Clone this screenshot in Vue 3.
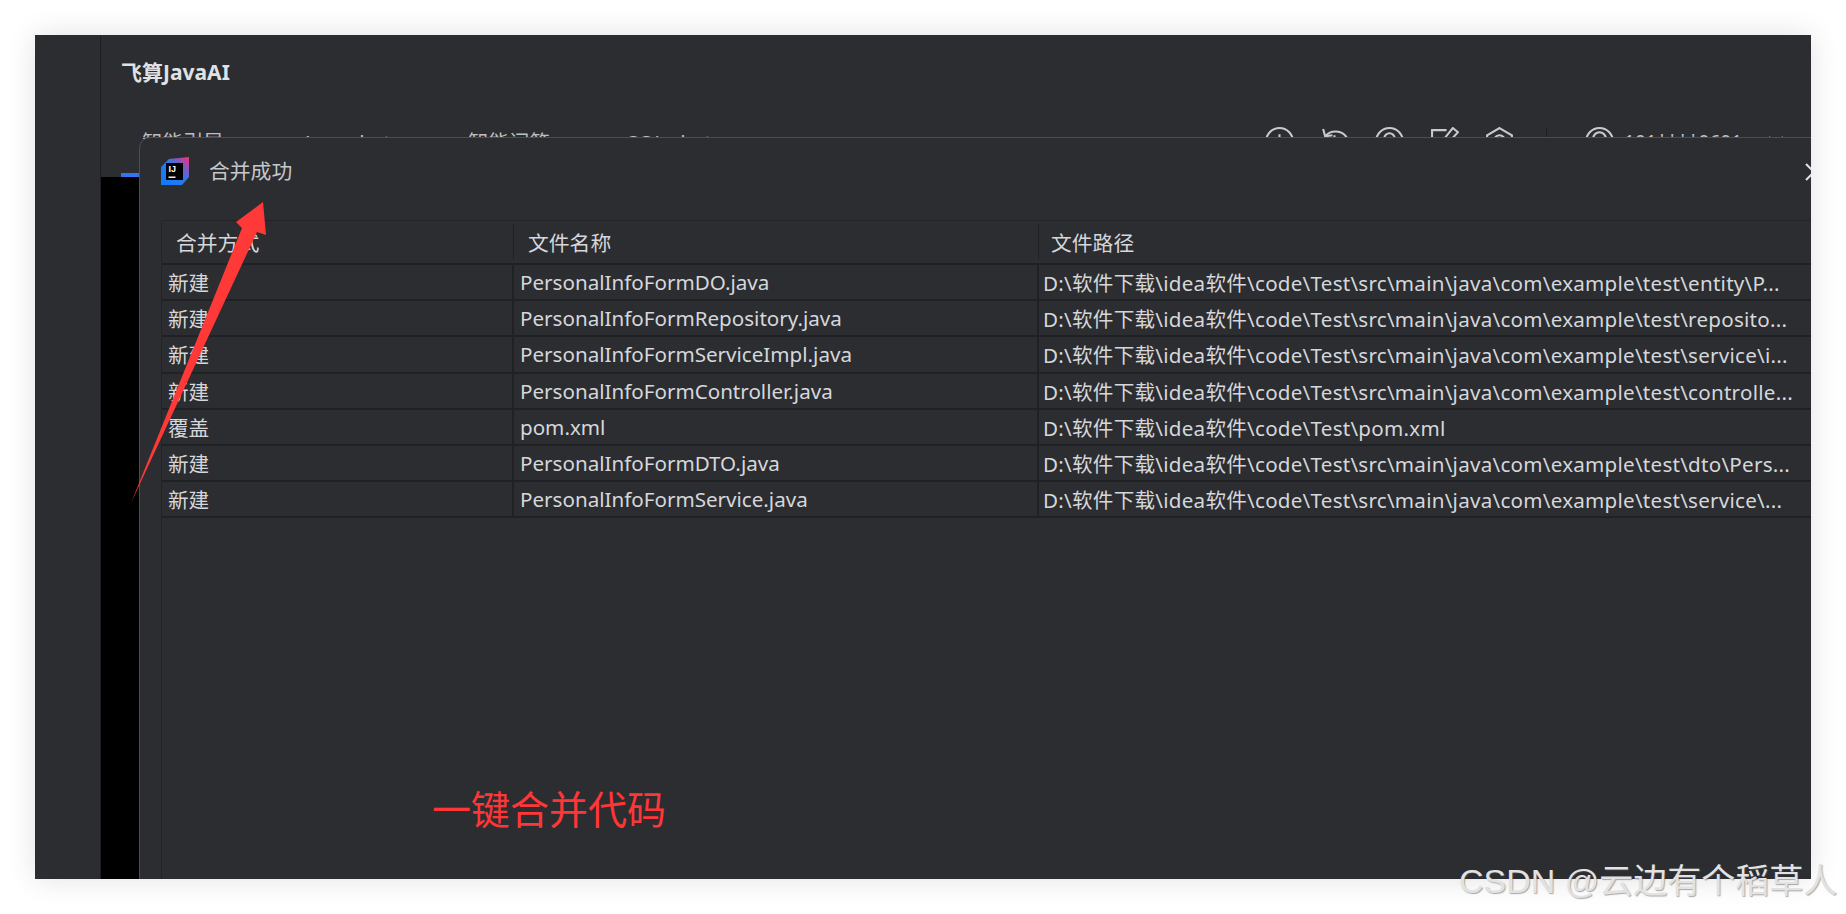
<script setup>
const tabs = [
  { label: '智能引导', cls: 't1' },
  { label: 'Java chat', cls: 't2' },
  { label: '智能问答', cls: 't3' },
  { label: 'SQL chat', cls: 't4' }
]
const base = 'D:\\软件下载\\idea软件\\code\\Test'
const pkg = base + '\\src\\main\\java\\com\\example\\test\\'
const rows = [
  { mode: '新建', name: 'PersonalInfoFormDO.java', path: pkg + 'entity\\P...' },
  { mode: '新建', name: 'PersonalInfoFormRepository.java', path: pkg + 'reposito...' },
  { mode: '新建', name: 'PersonalInfoFormServiceImpl.java', path: pkg + 'service\\i...' },
  { mode: '新建', name: 'PersonalInfoFormController.java', path: pkg + 'controlle...' },
  { mode: '覆盖', name: 'pom.xml', path: base + '\\pom.xml' },
  { mode: '新建', name: 'PersonalInfoFormDTO.java', path: pkg + 'dto\\Pers...' },
  { mode: '新建', name: 'PersonalInfoFormService.java', path: pkg + 'service\\...' }
]
</script>

<template>
  <div class="page">
    <div class="window">
      <aside class="rail"></aside>
      <main class="main">
        <div class="brand">飞算JavaAI</div>
        <div class="toolbar">
          <nav class="tabs">
            <span v-for="t in tabs" :key="t.label" class="tab" :class="t.cls">{{ t.label }}</span>
          </nav>
          <div class="tools">
            <svg class="ico" viewBox="0 0 28 28"><circle cx="14" cy="14" r="13"/><path d="M14 7v9M14 19v2"/></svg>
            <svg class="ico" viewBox="0 0 28 28"><path d="M5 9a13 13 0 1 1-3 8"/><path d="M3 2l2 7 7-1"/><path d="M14 8v8h6"/></svg>
            <svg class="ico" viewBox="0 0 28 28"><circle cx="14" cy="14" r="13"/><circle cx="14" cy="11" r="5"/><path d="M6 23c2-5 14-5 16 0"/></svg>
            <svg class="ico" viewBox="0 0 28 28"><path d="M16 3H2v23h23V12"/><path d="M12 17l2-6L22 1l5 4-9 10z"/></svg>
            <svg class="ico" viewBox="0 0 28 28"><path d="M14 1l12 7v13l-12 7-12-7V8z"/><circle cx="14" cy="13" r="5"/></svg>
            <span class="sep"></span>
            <svg class="ico user" viewBox="0 0 28 28"><circle cx="14" cy="14" r="13"/><circle cx="14" cy="11" r="6"/><path d="M5 24c3-5 15-5 18 0"/></svg>
            <span class="account">101****0601</span>
            <svg class="chev" viewBox="0 0 16 10"><path d="M1 1l7 7 7-7"/></svg>
          </div>
        </div>
        <div class="indicator"></div>
        <div class="canvas"></div>
      </main>

      <section class="modal">
        <header class="modal-head">
          <svg class="logo" viewBox="0 0 28 28">
            <defs>
              <linearGradient id="lg" x1="0" y1="1" x2="1" y2="0">
                <stop offset="0" stop-color="#0a7bff"/>
                <stop offset=".55" stop-color="#2f78ec"/>
                <stop offset=".8" stop-color="#9a4fb0"/>
                <stop offset="1" stop-color="#ff2d6f"/>
              </linearGradient>
            </defs>
            <path d="M8 2L28 0v20l-7 8H0V10z" fill="url(#lg)"/>
            <rect x="5" y="6" width="17" height="17" fill="#000"/>
            <rect x="7.5" y="19.5" width="7" height="1.4" fill="#fff"/>
            <text x="7.4" y="15" class="logo-txt">IJ</text>
          </svg>
          <span class="modal-title">合并成功</span>
          <svg class="close" viewBox="0 0 18 18"><path d="M1 1l16 16M17 1L1 17"/></svg>
        </header>

        <div class="table">
          <div class="thead">
            <div class="th">合并方式</div>
            <div class="th">文件名称</div>
            <div class="th">文件路径</div>
          </div>
          <div v-for="r in rows" :key="r.name" class="tr">
            <div class="td">{{ r.mode }}</div>
            <div class="td">{{ r.name }}</div>
            <div class="td path">{{ r.path }}</div>
          </div>
        </div>

        <div class="note">一键合并代码</div>
      </section>
    </div>

    <svg class="arrow" viewBox="0 0 1846 914">
      <polygon points="131,503 242,228 236,222 263,202 266,235 257,232"/>
    </svg>
    <div class="watermark">CSDN @云边有个稻草人</div>
  </div>
</template>

<style>
html, body { margin: 0; background: #fff; }
</style>

<style scoped>
.page {
  position: relative;
  width: 1846px;
  height: 914px;
  padding: 35px;
  box-sizing: border-box;
  overflow: hidden;
  background: #fff;
  font-family: "Noto Sans", "Noto Sans CJK SC", sans-serif;
}
.window {
  position: relative;
  display: flex;
  width: 1776px;
  height: 844px;
  overflow: hidden;
  background: #2b2d30;
  box-shadow: 0 0 28px rgba(0, 0, 0, .12);
}
.rail {
  flex: 0 0 65px;
  border-right: 1px solid #1e1f22;
}
.main {
  flex: 1;
  display: flex;
  flex-direction: column;
  min-width: 0;
}
.brand {
  padding: 21px 0 0 20px;
  height: 43px;
  font-size: 21px;
  font-weight: 700;
  line-height: 32px;
  color: #dfe1e5;
}
.toolbar {
  display: flex;
  justify-content: space-between;
  align-items: flex-start;
  height: 74px;
  padding-top: 28px;
  box-sizing: border-box;
}
.tabs { display: flex; padding-left: 41px; }
.tab {
  font-size: 20.5px;
  line-height: 30px;
  color: #bcbec4;
  white-space: nowrap;
}
.t1 { width: 163px; }
.t2 { width: 163px; }
.t3 { width: 159px; }
.tools {
  display: flex;
  align-items: flex-start;
  gap: 26px;
  padding-right: 27px;
}
.ico {
  width: 29px;
  height: 29px;
  fill: none;
  stroke: #c8cacd;
  stroke-width: 2;
}
.sep {
  width: 1px;
  height: 30px;
  background: #1e1f22;
  margin-left: 6px;
}
.user { margin-left: 12px; }
.account {
  margin-left: -16px;
  font-size: 19px;
  line-height: 28px;
  padding-top: 1px;
  color: #bcbec4;
}
.chev {
  width: 16px;
  height: 10px;
  margin-top: 9px;
  fill: none;
  stroke: #bcbec4;
  stroke-width: 2;
}
.indicator {
  width: 36px;
  height: 4px;
  margin-left: 20px;
  flex: none;
  background: #3574f0;
}
.canvas {
  flex: 1;
  background: #000;
}
.modal {
  position: absolute;
  left: 104px;
  top: 102px;
  width: 1760px;
  height: 800px;
  box-sizing: border-box;
  padding: 18px 0 0 21px;
  background: #2c2d31;
  border: 1px solid #4b4d51;
  border-radius: 11px 0 0 0;
}
.modal-head {
  display: flex;
  align-items: center;
  height: 28px;
  margin-bottom: 36px;
}
.logo { width: 28px; height: 28px; flex: none; margin-top: 1px; }
.logo-txt {
  font-family: "Liberation Sans", sans-serif;
  font-size: 9px;
  font-weight: 700;
  fill: #fff;
}
.modal-title {
  margin-left: 20px;
  font-size: 20.8px;
  color: #c5c7cb;
}
.close {
  position: absolute;
  left: 1665px;
  top: 25px;
  width: 18px;
  height: 18px;
  fill: none;
  stroke: #dfe1e5;
  stroke-width: 2;
}
.table {
  border-left: 1px solid #232427;
  border-top: 1px solid #232427;
  height: 700px;
}
.thead, .tr {
  display: grid;
  grid-template-columns: 352px 525px 1fr;
  color: #d5d7db;
  border-bottom: 2px solid #202124;
  box-sizing: border-box;
}
.thead { height: 44px; }
.tr { height: 36.2px; }
.th {
  display: flex;
  align-items: center;
  padding-left: 14px;
  font-size: 20.8px;
  height: 36px;
  margin-top: 3px;
  border-right: 1px solid #202124;
  box-sizing: border-box;
}
.td {
  display: flex;
  align-items: center;
  padding-left: 6px;
  font-size: 20.6px;
  white-space: nowrap;
  overflow: hidden;
  border-right: 2px solid #202124;
  box-sizing: border-box;
}
.td:last-child, .th:last-child { border-right: 0; }
.th:last-child { padding-left: 12px; }
.path { padding-left: 4px; letter-spacing: .25px; }
.note {
  position: absolute;
  left: 292px;
  top: 644px;
  font-size: 39px;
  line-height: 50px;
  color: #ff3636;
  font-family: "Noto Sans CJK SC", sans-serif;
  font-weight: 400;
}
.arrow {
  position: absolute;
  left: 0;
  top: 0;
  width: 1846px;
  height: 914px;
  pointer-events: none;
}
.arrow polygon { fill: #ff3838; }
.watermark {
  position: absolute;
  left: 1459px;
  top: 859px;
  font-family: "Liberation Sans", "Noto Sans CJK SC", sans-serif;
  font-size: 34px;
  line-height: 44px;
  white-space: nowrap;
  color: #e2e2e2;
  text-shadow: 1px 1px 1px rgba(90, 90, 90, .5);
}
</style>
